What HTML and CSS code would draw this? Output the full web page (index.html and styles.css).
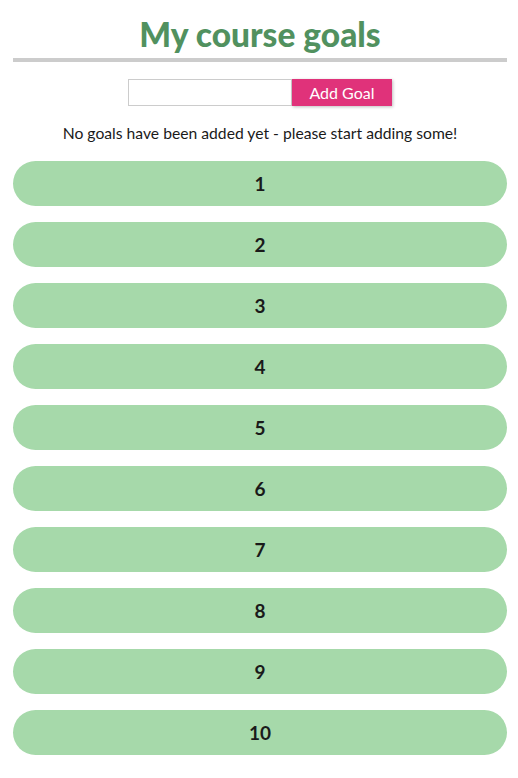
FILE: index.html
```html
<!DOCTYPE html>
<html lang="en">
<head>
  <meta charset="UTF-8"/>
  <meta name="viewport" content="width=device-width, initial-scale=1.0"/>
  <title>Course Goals</title>
  <link rel="stylesheet" href="styles.css">
</head>
<body>

  <div class="page">
    <h1 class="title">My course goals</h1>

    <form class="goal-form">
      <input type="text" class="goal-input"/>
      <button type="button" class="goal-btn">Add Goal</button>
    </form>

    <p class="empty">No goals have been added yet - please start adding some!</p>

    <ul class="goals">
      <li class="goal">1</li>
      <li class="goal">2</li>
      <li class="goal">3</li>
      <li class="goal">4</li>
      <li class="goal">5</li>
      <li class="goal">6</li>
      <li class="goal">7</li>
      <li class="goal">8</li>
      <li class="goal">9</li>
      <li class="goal">10</li>
    </ul>
  </div>

</body>
</html>
```

FILE: styles.css
```css
/* Reset */
* { margin:0; padding:0; box-sizing:border-box; }
html, body {
  background:#fff; color:#1a1a1a;
  font-family:'Lato','Noto Sans',sans-serif;
}

.page {
  padding:0 11px 0 13px;
}

/* Header */
.title {
  padding-top:16px; padding-bottom:6px;
  text-align:center;
  font-size:33.5px; font-weight:900;
  line-height:36px;
  color:#51915f;
  border-bottom:4px solid #ccc;
}

/* Form */
.goal-form {
  display:flex; justify-content:center;
  margin-top:17px;
}
.goal-input {
  width:164px; height:27px;
  border:1px solid #ccc;
  font:inherit;
}
.goal-btn {
  width:100px; height:27px;
  border:none;
  background:#e0327a; color:#fff;
  font:inherit; font-size:16px;
  box-shadow:1px 1px 3px rgba(0,0,0,0.25);
  cursor:pointer;
}

.empty {
  margin-top:18px;
  text-align:center;
  font-size:15.7px;
}

/* Goals */
.goals {
  list-style:none;
  display:flex; flex-direction:column;
  gap:16px;
  margin-top:19px;
}
.goal {
  height:45px;
  display:flex; align-items:center; justify-content:center;
  background:#a6d9aa;
  border-radius:23px;
  font-size:19px; font-weight:700;
  color:#1a1a1a;
}
```
